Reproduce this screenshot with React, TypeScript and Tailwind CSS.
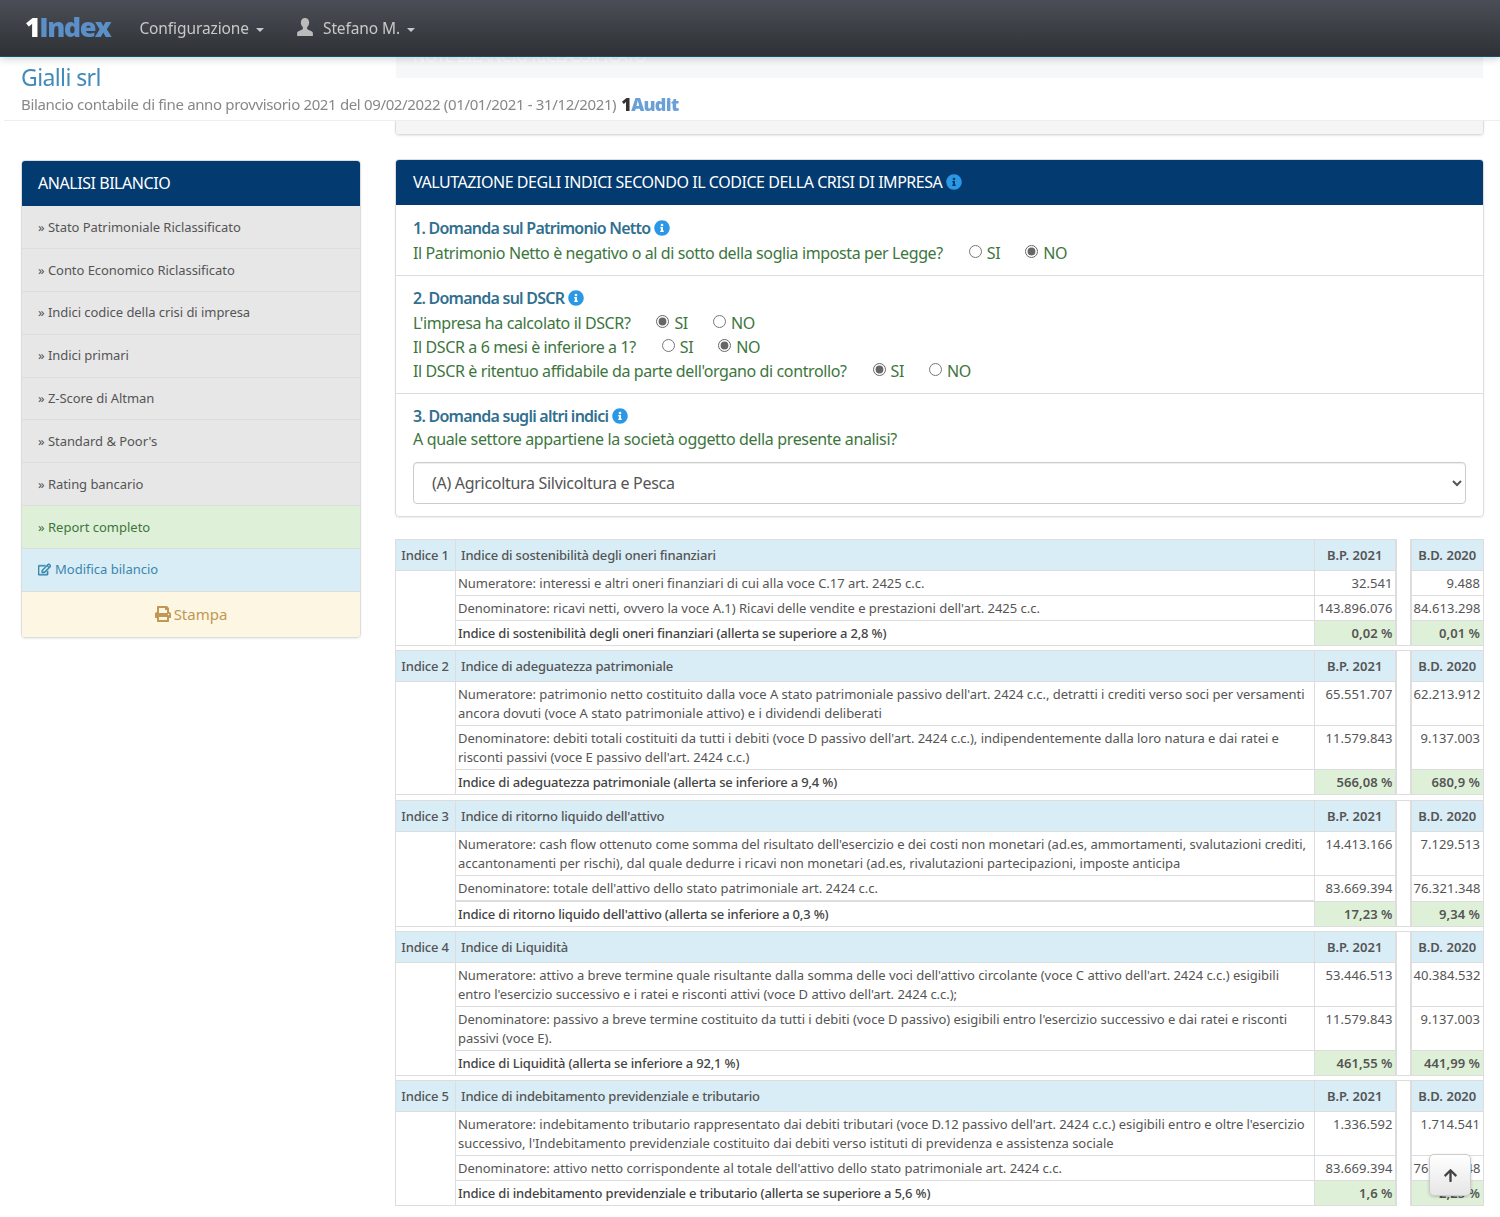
import { FaArrowUp, FaInfoCircle, FaPrint, FaRegEdit } from 'react-icons/fa'

interface Indice {
  n: number
  title: string
  num: string
  den: string
  total: string
  values: [string, string][]
  thick?: boolean
  gap?: string
}

const indici: Indice[] = [
  {
    n: 1,
    title: 'Indice di sostenibilità degli oneri finanziari',
    num: "Numeratore: interessi e altri oneri finanziari di cui alla voce C.17 art. 2425 c.c.",
    den: "Denominatore: ricavi netti, ovvero la voce A.1) Ricavi delle vendite e prestazioni dell'art. 2425 c.c.",
    total: 'Indice di sostenibilità degli oneri finanziari (allerta se superiore a 2,8 %)',
    values: [['32.541', '9.488'], ['143.896.076', '84.613.298'], ['0,02 %', '0,01 %']],
  },
  {
    n: 2,
    title: 'Indice di adeguatezza patrimoniale',
    num: "Numeratore: patrimonio netto costituito dalla voce A stato patrimoniale passivo dell'art. 2424 c.c., detratti i crediti verso soci per versamenti\nancora dovuti (voce A stato patrimoniale attivo) e i dividendi deliberati",
    den: "Denominatore: debiti totali costituiti da tutti i debiti (voce D passivo dell'art. 2424 c.c.), indipendentemente dalla loro natura e dai ratei e\nrisconti passivi (voce E passivo dell'art. 2424 c.c.)",
    total: 'Indice di adeguatezza patrimoniale (allerta se inferiore a 9,4 %)',
    values: [['65.551.707', '62.213.912'], ['11.579.843', '9.137.003'], ['566,08 %', '680,9 %']],
    gap: 'h-[6px]',
  },
  {
    n: 3,
    title: "Indice di ritorno liquido dell'attivo",
    num: "Numeratore: cash flow ottenuto come somma del risultato dell'esercizio e dei costi non monetari (ad.es, ammortamenti, svalutazioni crediti,\naccantonamenti per rischi), dal quale dedurre i ricavi non monetari (ad.es, rivalutazioni partecipazioni, imposte anticipa",
    den: "Denominatore: totale dell'attivo dello stato patrimoniale art. 2424 c.c.",
    total: "Indice di ritorno liquido dell'attivo (allerta se inferiore a 0,3 %)",
    values: [['14.413.166', '7.129.513'], ['83.669.394', '76.321.348'], ['17,23 %', '9,34 %']],
    thick: true,
  },
  {
    n: 4,
    title: 'Indice di Liquidità',
    num: "Numeratore: attivo a breve termine quale risultante dalla somma delle voci dell'attivo circolante (voce C attivo dell'art. 2424 c.c.) esigibili\nentro l'esercizio successivo e i ratei e risconti attivi (voce D attivo dell'art. 2424 c.c.);",
    den: "Denominatore: passivo a breve termine costituito da tutti i debiti (voce D passivo) esigibili entro l'esercizio successivo e dai ratei e risconti\npassivi (voce E).",
    total: 'Indice di Liquidità (allerta se inferiore a 92,1 %)',
    values: [['53.446.513', '40.384.532'], ['11.579.843', '9.137.003'], ['461,55 %', '441,99 %']],
  },
  {
    n: 5,
    title: 'Indice di indebitamento previdenziale e tributario',
    num: "Numeratore: indebitamento tributario rappresentato dai debiti tributari (voce D.12 passivo dell'art. 2424 c.c.) esigibili entro e oltre l'esercizio\nsuccessivo, l'Indebitamento previdenziale costituito dai debiti verso istituti di previdenza e assistenza sociale",
    den: "Denominatore: attivo netto corrispondente al totale dell'attivo dello stato patrimoniale art. 2424 c.c.",
    total: 'Indice di indebitamento previdenziale e tributario (allerta se superiore a 5,6 %)',
    values: [['1.336.592', '1.714.541'], ['83.669.394', '76.321.348'], ['1,6 %', '2,25 %']],
  },
]

const menu = [
  'Stato Patrimoniale Riclassificato',
  'Conto Economico Riclassificato',
  'Indici codice della crisi di impresa',
  'Indici primari',
  'Z-Score di Altman',
  'Standard & Poor\'s',
  'Rating bancario',
]

function Radio({ label, checked, name }: { label: string; checked?: boolean; name: string }) {
  return (
    <label className="inline-flex items-center gap-[5px] ml-[26px] [&+label]:ml-[25px] translate-y-[1px]">
      <input
        type="radio"
        name={name}
        defaultChecked={checked}
        className="m-0 w-[13px] h-[13px] -translate-y-[2px] accent-[#666]"
      />
      {label}
    </label>
  )
}

function Question({ text, name, si }: { text: string; name: string; si: boolean }) {
  return (
    <div className="h-[24px] leading-[24px] text-[#3c763d] tracking-[-0.39px]">
      {text}
      <Radio name={name} label="SI" checked={si} />
      <Radio name={name} label="NO" checked={!si} />
    </div>
  )
}

function DomandaTitle({ children }: { children: string }) {
  return (
    <div className="flex items-center gap-[4px] text-[16px] leading-[24px] font-semibold text-[#31708f] tracking-[-0.75px]">
      {children}
      <FaInfoCircle className="text-[#2b98e6] w-[16px] h-[16px]" />
    </div>
  )
}

const cell = 'border border-[#ddd] px-[2px] align-top'
const numCell = 'border border-[#ddd] pl-[2px] pr-[2px] last:pr-[3px] pt-[3px] pb-[2px] text-right align-top whitespace-nowrap tracking-[0.05px]'

function IndiceRows({ ind, last }: { ind: Indice; last: boolean }) {
  const head = 'border border-[#ddd] bg-[#d9edf7] h-[31px] font-medium text-[#555] tracking-[-0.19px]'
  const headNum = 'border border-[#ddd] bg-[#d9edf7] h-[31px] text-center font-semibold text-[#555] tracking-[0.05px]'
  return (
    <>
      <tr>
        <td className={`${head} text-center pr-[1px]`}>Indice {ind.n}</td>
        <td className={`${head} pl-[5px]`}>{ind.title}</td>
        <td className={headNum}>B.P. 2021</td>
        <td className="border-x-2 border-[#ddd] bg-white" />
        <td className={headNum}>B.D. 2020</td>
      </tr>
      <tr>
        <td rowSpan={3} className="border border-[#ddd] bg-white" />
        <td className={`${cell} pt-[3px] pb-[2px] whitespace-pre-line`}>{ind.num}</td>
        <td className={numCell}>{ind.values[0][0]}</td>
        <td className="border-x-2 border-[#ddd] bg-white" />
        <td className={numCell}>{ind.values[0][1]}</td>
      </tr>
      <tr>
        <td className={`${cell} pt-[3px] pb-[2px] whitespace-pre-line`}>{ind.den}</td>
        <td className={numCell}>{ind.values[1][0]}</td>
        <td className="border-x-2 border-[#ddd] bg-white" />
        <td className={numCell}>{ind.values[1][1]}</td>
      </tr>
      <tr>
        <td className={`${cell} pt-[3px] pb-[2px] font-medium text-[#444] tracking-[-0.18px] ${ind.thick ? 'border-t-2' : ''}`}>
          {ind.total}
        </td>
        <td className={`${numCell} bg-[#dff0d8] font-semibold`}>{ind.values[2][0]}</td>
        <td className="border-x-2 border-[#ddd] bg-white" />
        <td className={`${numCell} bg-[#dff0d8] font-semibold`}>{ind.values[2][1]}</td>
      </tr>
      {!last && (
        <tr>
          <td colSpan={5} className={`${ind.gap ?? 'h-[5px]'} border border-[#ddd] bg-white p-0`} />
        </tr>
      )}
    </>
  )
}

export default function App() {
  return (
    <div className="relative min-h-screen bg-white font-['Noto_Sans',sans-serif] text-[#555] pt-[33px] pb-[10px] pl-[21px] pr-[16px] flex gap-[34px]">
      {/* barra fissa in alto */}
      <div className="fixed top-0 inset-x-0 z-30 h-[57px] flex items-center pl-[25px] pt-[1px] border-b border-[#0b5577] bg-gradient-to-b from-[#4b4e56] to-[#2e3236] shadow-[0_2px_8px_rgba(0,0,0,0.18)] text-[#c8c8c8] text-[15.5px] tracking-[-0.1px]">
        <span className="font-['Open_Sans',sans-serif] font-extrabold text-[27px] tracking-[-1.5px] mr-[29px] -mt-[2px]">
          <span className="text-white">1</span>
          <span className="text-[#5b8fc7]">Index</span>
        </span>
        <span className="flex items-center gap-[7px]">
          Configurazione
          <span className="border-x-[4px] border-x-transparent border-t-[4px] border-t-[#c8c8c8] mt-[2px]" />
        </span>
        <span className="flex items-center gap-[7px] ml-[32px]">
          <svg viewBox="0 0 16 16" className="w-[18px] h-[18px] mr-[2px] fill-[#bbb] -mt-[3px]">
            <path d="M8 0c2.3 0 3.7 1.7 3.7 4.1 0 1.7-.8 3.3-1.8 4.2v1.3c0 .6 1.1.9 2.4 1.4 1.4.6 2.7 1.2 2.7 2.2V16H1v-2.8c0-1 1.3-1.6 2.7-2.2 1.3-.5 2.4-.8 2.4-1.4V8.3C5.1 7.4 4.3 5.8 4.3 4.1 4.3 1.7 5.7 0 8 0z" />
          </svg>
          Stefano M.
          <span className="border-x-[4px] border-x-transparent border-t-[4px] border-t-[#c8c8c8] mt-[2px]" />
        </span>
      </div>

      {/* intestazione fissa, lascia intravedere il pannello sotto */}
      <div className="fixed top-[57px] left-[4px] right-0 z-20 h-[64px] pl-[17px] bg-white/[0.96] border-b border-[#eee]">
        <div className="text-[#428bba] text-[23px] leading-[40px] tracking-[-0.6px]">Gialli srl</div>
        <div className="flex items-center text-[#888] text-[15px] leading-[20px] -mt-[3px] tracking-[-0.35px] whitespace-nowrap">
          Bilancio contabile di fine anno provvisorio 2021 del 09/02/2022 (01/01/2021 - 31/12/2021)
          <span className="ml-[5px] font-['Open_Sans',sans-serif] font-extrabold text-[18px] tracking-[-0.7px]">
            <span className="text-[#333]">1</span>
            <span className="text-[#6a9fd8]">Audit</span>
          </span>
        </div>
      </div>

      {/* colonna sinistra */}
      <div className="w-[340px] shrink-0 pt-[127px]">
        <div className="rounded-[4px] border border-[#ddd] shadow-[0_1px_2px_rgba(0,0,0,0.08)] overflow-hidden">
          <div className="h-[45px] flex items-center pl-[16px] pb-[1px] bg-[#033a70] text-white text-[16px] tracking-[-0.45px]">
            ANALISI BILANCIO
          </div>
          {menu.map((m) => (
            <div
              key={m}
              className="h-[42.875px] flex items-center pl-[16px] pt-[1px] bg-[#e7e7e7] border-b border-[#ddd] text-[13px] tracking-[-0.05px]"
            >
              » {m}
            </div>
          ))}
          <div className="h-[42.875px] flex items-center pl-[16px] pt-[1px] bg-[#dff0d8] border-b border-[#ddd] text-[13px] text-[#3c763d]">
            » Report completo
          </div>
          <div className="h-[42.875px] flex items-center gap-[4px] pl-[16px] bg-[#d9edf7] border-b border-[#ddd] text-[13px] text-[#3a87ad]">
            <FaRegEdit className="w-[13px] h-[13px] stroke-current stroke-[24px]" />
            Modifica bilancio
          </div>
          <div className="h-[45px] flex items-center justify-center gap-[3px] bg-[#fcf6e3] text-[15px] text-[#c09853]">
            <FaPrint className="w-[16px] h-[16px]" />
            Stampa
          </div>
        </div>
      </div>

      {/* colonna destra */}
      <div className="flex-1 min-w-0">
        <div className="h-[102px] mb-[24px] rounded-[4px] border border-[#ddd] shadow-[0_1px_2px_rgba(0,0,0,0.1)] overflow-hidden flex flex-col">
          <div className="h-[44px] bg-[#033a70] pl-[17px] pt-[10px] text-white text-[16px] tracking-[-0.45px]">NOTE BILANCIO RICLASSIFICATO</div>
          <div className="flex-1 bg-white pl-[17px] pt-[16px] text-[#555] text-[14px]">Note di conto economico</div>
          <div className="h-[15px] bg-[#f5f5f5]" />
        </div>

        <div className="rounded-[4px] border border-[#ddd] shadow-[0_1px_2px_rgba(0,0,0,0.08)] overflow-hidden mb-[22px]">
          <div className="h-[45px] flex items-center gap-[4px] pl-[17px] pb-[1px] bg-[#033a70] text-white text-[16px] tracking-[-0.46px]">
            VALUTAZIONE DEGLI INDICI SECONDO IL CODICE DELLA CRISI DI IMPRESA
            <FaInfoCircle className="text-[#2b98e6] w-[16px] h-[16px]" />
          </div>
          <div className="px-[17px] pt-[11px] pb-[11px] border-b border-[#ddd]">
            <DomandaTitle>1. Domanda sul Patrimonio Netto</DomandaTitle>
            <Question name="q1" si={false} text="Il Patrimonio Netto è negativo o al di sotto della soglia imposta per Legge?" />
          </div>
          <div className="px-[17px] pt-[10px] pb-[11px] border-b border-[#ddd]">
            <DomandaTitle>2. Domanda sul DSCR</DomandaTitle>
            <Question name="q2" si={true} text="L'impresa ha calcolato il DSCR?" />
            <Question name="q3" si={false} text="Il DSCR a 6 mesi è inferiore a 1?" />
            <Question name="q4" si={true} text="Il DSCR è ritentuo affidabile da parte dell'organo di controllo?" />
          </div>
          <div className="px-[17px] pt-[10px] pb-[12px]">
            <DomandaTitle>3. Domanda sugli altri indici</DomandaTitle>
            <div className="h-[24px] leading-[22px] text-[#3c763d] tracking-[-0.35px] mb-[10px]">
              A quale settore appartiene la società oggetto della presente analisi?
            </div>
            <select className="w-full h-[42px] pl-[14px] pr-[8px] bg-white border border-[#ccc] rounded-[4px] text-[16px] text-[#555] tracking-[-0.3px] shadow-[inset_0_1px_1px_rgba(0,0,0,0.075)]">
              <option>(A) Agricoltura Silvicoltura e Pesca</option>
            </select>
          </div>
        </div>

        <table className="w-full table-fixed border-collapse text-[13px] leading-[19px] tracking-[-0.03px]">
          <colgroup>
            <col className="w-[60px]" />
            <col />
            <col className="w-[81px]" />
            <col className="w-[15px]" />
            <col className="w-[73px]" />
          </colgroup>
          <tbody>
            {indici.map((ind, i) => (
              <IndiceRows key={ind.n} ind={ind} last={i === indici.length - 1} />
            ))}
          </tbody>
        </table>
      </div>

      <button
        type="button"
        className="fixed left-[1429px] top-[1154px] z-10 w-[42px] h-[42px] flex items-center justify-center rounded-[5px] border border-[#ccc] bg-gradient-to-b from-white to-[#e6e6e6] shadow-[0_1px_3px_rgba(0,0,0,0.2)] text-[#444]"
      >
        <FaArrowUp className="w-[15px] h-[15px]" />
      </button>
    </div>
  )
}
